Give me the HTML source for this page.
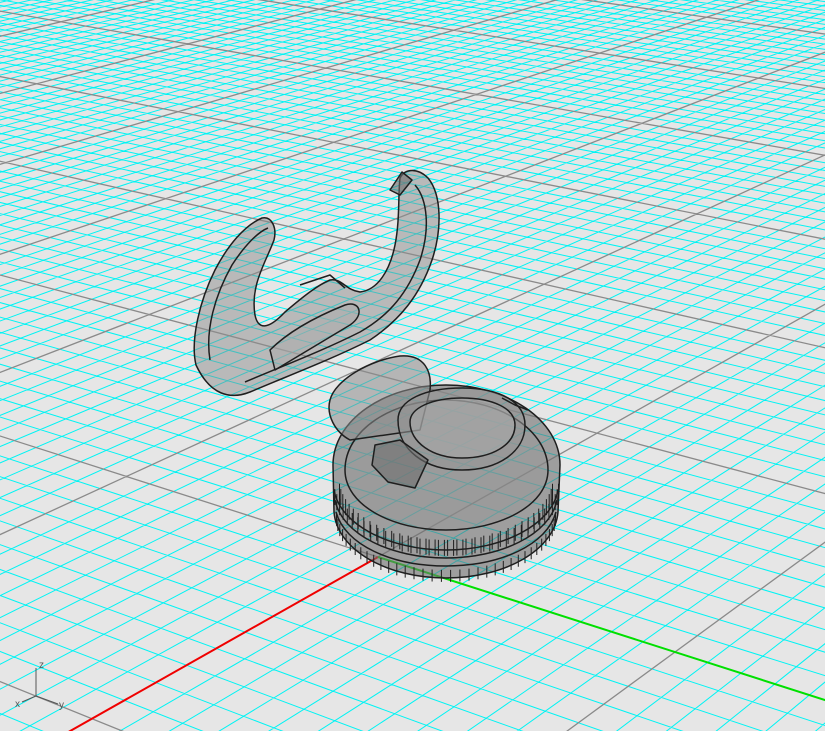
<!DOCTYPE html>
<html><head><meta charset="utf-8"><style>
html,body{margin:0;padding:0;background:#e6e6e6;overflow:hidden;width:825px;height:731px}
svg{display:block}
</style></head><body>
<svg id="s" width="825" height="731" viewBox="0 0 825 731" xmlns="http://www.w3.org/2000/svg">
<rect width="825" height="731" fill="#e6e6e6"/>
<g id="minor" stroke="#00f4f4" stroke-width="1" fill="none"></g>
<g id="major" stroke="#8a8a8a" stroke-width="1.3" fill="none"></g>
<g id="axes" fill="none" stroke-width="2"></g>
<g stroke="#1e1e1e" stroke-width="1.5" stroke-linejoin="round">
<path d="M196 365 C190 340 200 300 215 270 C228 245 245 225 262 218 C272 216 277 228 274 240 C266 262 250 285 255 315 C258 330 268 330 285 312 C305 295 318 285 330 280 C342 278 345 290 360 292 C378 290 390 270 395 245 C400 220 398 195 400 178 C405 168 418 168 428 178 C442 195 442 230 432 260 C420 295 400 320 370 340 C330 360 290 375 250 392 C230 400 210 395 196 365 Z" fill="rgba(140,140,140,0.5)"/>
<path d="M210 360 C205 330 215 295 232 265 C245 245 258 232 268 228" fill="none"/>
<path d="M415 185 C428 200 430 230 420 260 C408 292 390 315 360 332 C320 352 285 365 245 382" fill="none"/>
<path d="M270 350 C290 330 320 315 345 305 C360 300 365 315 350 325 C325 340 300 355 275 370 Z" fill="rgba(170,170,170,0.5)"/>
<path d="M300 285 L330 275 L345 288" fill="none"/>
<path d="M390 190 L402 172 L412 180 L400 195 Z" fill="rgba(110,110,110,0.6)"/>
</g>
<g stroke="#1e1e1e" stroke-width="1.5" stroke-linejoin="round">
<path d="M333 465 C333 420 385 385 446 385 C507 385 560 420 560 465 L558 512 C555 550 505 578 446 578 C387 578 337 550 334 512 Z" fill="rgba(110,110,110,0.6)"/>
<path d="M334 490 C340 525 390 550 446 550 C502 550 552 525 558 490" fill="none"/>
<path d="M335 500 C342 535 392 558 446 558 C500 558 550 535 557 500" fill="none"/>
<path d="M336 512 C345 545 392 566 446 566 C500 566 547 545 556 512" fill="none"/>
<path d="M345 470 C345 430 392 400 446 400 C500 400 548 430 548 470 C548 505 500 530 446 530 C392 530 345 505 345 470 Z" fill="rgba(150,150,150,0.45)"/>
<g stroke-width="1" id="ribs"></g>
<path d="M330 400 C335 380 370 360 400 356 C425 354 432 372 430 390 L420 430 L350 440 C335 432 326 415 330 400 Z" fill="rgba(140,140,140,0.55)"/>
<path d="M398 420 C398 400 425 388 462 388 C500 388 525 402 525 425 C525 452 498 470 462 470 C425 470 398 450 398 420 Z" fill="rgba(150,150,150,0.55)"/>
<path d="M410 422 C410 408 432 398 462 398 C492 398 515 408 515 425 C515 445 492 458 462 458 C432 458 410 442 410 422 Z" fill="rgba(175,175,175,0.45)"/>
<path d="M375 445 L400 440 L428 460 L415 488 L388 482 L372 465 Z" fill="rgba(110,110,110,0.6)"/>
<path d="M502 398 L515 405 L528 410" fill="none"/>
</g>
</svg>
<script>
(function(){
var O=[378,557],Vx=[2248,-500],Vy=[-2925,-500],p=0.01327,q=0.00825;
function P(u,v){var d=1+u*p+v*q;return [(O[0]+u*p*Vx[0]+v*q*Vy[0])/d,(O[1]+u*p*Vx[1]+v*q*Vy[1])/d,d];}
var mn='',mj='',N=600,M=-80;
function seg(a,b){return 'M'+a[0].toFixed(1)+' '+a[1].toFixed(1)+'L'+b[0].toFixed(1)+' '+b[1].toFixed(1);}
for(var u=M;u<=N;u++){var vmin=(0.05-1-u*p)/q;if(vmin<M)vmin=M;var a=P(u,vmin),b=P(u,N);if(a[2]<=0)continue;var s=seg(a,b);if(u%10==0)mj+=s;else mn+=s;}
for(var v=M;v<=N;v++){var umin=(0.05-1-v*q)/p;if(umin<M)umin=M;var a=P(umin,v),b=P(N,v);if(a[2]<=0)continue;var s=seg(a,b);if(v%10==0)mj+=s;else mn+=s;}
document.getElementById('minor').innerHTML='<path d="'+mn+'"/>';
document.getElementById('major').innerHTML='<path d="'+mj+'"/>';
var r0=P(0,0),r1=P(-40,0),g1=P(0,-60);
document.getElementById('axes').innerHTML='<path stroke="#f00000" d="'+seg(r0,r1)+'"/><path stroke="#00e000" d="'+seg(r0,g1)+'"/>'+
'<path stroke="#555" stroke-width="1" d="M36 696L36 668M36 696L22 702M36 696L58 704"/>'+
'<text x="39" y="668" font-family="Liberation Sans,sans-serif" font-size="10" fill="#555" stroke="none">z</text>'+
'<text x="15" y="707" font-family="Liberation Sans,sans-serif" font-size="10" fill="#555" stroke="none">x</text>'+
'<text x="59" y="708" font-family="Liberation Sans,sans-serif" font-size="10" fill="#555" stroke="none">y</text>';
var r='';for(var i=0;i<36;i++){var t=Math.PI*(0.03+0.94*i/35);var x=446-Math.cos(t)*110,y=470+Math.sin(t)*62;
r+='M'+(x-3).toFixed(1)+' '+(y+8).toFixed(1)+'L'+(x-3).toFixed(1)+' '+(y+24).toFixed(1)+'M'+(x+3).toFixed(1)+' '+(y+8).toFixed(1)+'L'+(x+3).toFixed(1)+' '+(y+24).toFixed(1);
r+='M'+x.toFixed(1)+' '+(y+38).toFixed(1)+'L'+x.toFixed(1)+' '+(y+50).toFixed(1);}
document.getElementById('ribs').innerHTML='<path fill="none" d="'+r+'"/>';
})();
</script>
</body></html>
